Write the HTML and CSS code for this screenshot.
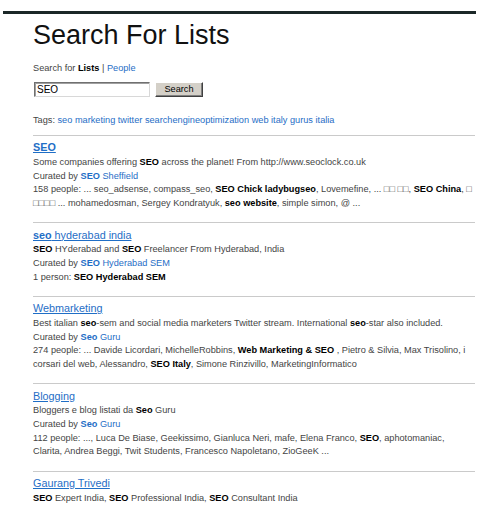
FILE: index.html
```html
<!DOCTYPE html>
<html lang="en">
<head>
    <meta charset="UTF-8">
    <title>Search For Lists</title>
    <link rel="stylesheet" href="styles.css">
</head>
<body>

    <div class="top-bar"></div>

    <div class="page">
        <h1>Search For Lists</h1>

        <div class="search-for">
            Search for <b>Lists</b> | <a href="#">People</a>
        </div>

        <form class="search-form" onsubmit="return false">
            <input type="text" class="search-input" value="SEO">
            <button type="submit" class="search-btn">Search</button>
        </form>

        <div class="tags">
            Tags: <a href="#">seo</a> <a href="#">marketing</a> <a href="#">twitter</a> <a href="#">searchengineoptimization</a> <a href="#">web</a> <a href="#">italy</a> <a href="#">gurus</a> <a href="#">italia</a>
        </div>

        <!-- Results -->
        <div class="results">
            <div class="result">
                <a href="#" class="result-title"><b>SEO</b></a>
                <p>Some companies offering <b>SEO</b> across the planet! From http://www.seoclock.co.uk</p>
                <p>Curated by <a href="#"><b>SEO</b> Sheffield</a></p>
                <p>158 people: ... seo_adsense, compass_seo, <b>SEO Chick ladybugseo</b>, Lovemefine, ... □□ □□, <b>SEO China</b>, □ □□□□ ... mohamedosman, Sergey Kondratyuk, <b>seo website</b>, simple simon, @ ...</p>
            </div>

            <div class="result">
                <a href="#" class="result-title"><b>seo</b> hyderabad india</a>
                <p><b>SEO</b> HYderabad and <b>SEO</b> Freelancer From Hyderabad, India</p>
                <p>Curated by <a href="#"><b>SEO</b> Hyderabad SEM</a></p>
                <p>1 person: <b>SEO Hyderabad SEM</b></p>
            </div>

            <div class="result">
                <a href="#" class="result-title">Webmarketing</a>
                <p>Best italian <b>seo</b>-sem and social media marketers Twitter stream. International <b>seo</b>-star also included.</p>
                <p>Curated by <a href="#"><b>Seo</b> Guru</a></p>
                <p>274 people: ... Davide Licordari, MichelleRobbins, <b>Web Marketing &amp; SEO</b> , Pietro &amp; Silvia, Max Trisolino, i corsari del web, Alessandro, <b>SEO Italy</b>, Simone Rinzivillo, MarketingInformatico</p>
            </div>

            <div class="result">
                <a href="#" class="result-title">Blogging</a>
                <p>Bloggers e blog listati da <b>Seo</b> Guru</p>
                <p>Curated by <a href="#"><b>Seo</b> Guru</a></p>
                <p>112 people: ..., Luca De Biase, Geekissimo, Gianluca Neri, mafe, Elena Franco, <b>SEO</b>, aphotomaniac, Clarita, Andrea Beggi, Twit Students, Francesco Napoletano, ZioGeeK ...</p>
            </div>

            <div class="result">
                <a href="#" class="result-title">Gaurang Trivedi</a>
                <p><b>SEO</b> Expert India, <b>SEO</b> Professional India, <b>SEO</b> Consultant India</p>
            </div>
        </div>
    </div>

</body>
</html>
```

FILE: styles.css
```css
:root {
    --link: #1f6ec6;
    --text: #444;
    --rule: #cacaca;
}

* {
    margin: 0;
    padding: 0;
    box-sizing: border-box;
}

body {
    font-family: 'Liberation Sans', Arial, sans-serif;
    font-size: 9.2px;
    color: var(--text);
    background: #fff;
    overflow: hidden;
}

a {
    color: var(--link);
    text-decoration: none;
}

b {
    color: #000;
}

a b {
    color: inherit;
}

.top-bar {
    height: 3px;
    margin: 11px 4px 0 3px;
    background: #1b2828;
}

.page {
    padding: 0 5px 0 33px;
}

h1 {
    font-size: 27px;
    font-weight: normal;
    line-height: 30px;
    color: #111;
    margin-top: 6px;
}

.search-for {
    margin-top: 11.65px;
    line-height: 13.7px;
}

.search-form {
    display: flex;
    gap: 5px;
    margin-top: 6.65px;
    margin-left: 1px;
}

.search-input {
    width: 116px;
    height: 15px;
    padding: 0 2px;
    border: 1px solid;
    border-color: #707070 #d8d8d8 #d8d8d8 #707070;
    box-shadow: inset 1px 1px 0 #a0a0a0;
    font-family: 'Liberation Sans', Arial, sans-serif;
    font-size: 10px;
    color: #000;
    outline: none;
}

.search-btn {
    width: 48px;
    height: 15px;
    background: #d4d0c8;
    border: 1px solid;
    border-color: #fff #404040 #404040 #fff;
    box-shadow: inset -1px -1px 0 #808080;
    font-family: 'Liberation Sans', Arial, sans-serif;
    font-size: 9.2px;
    color: #000;
    cursor: pointer;
}

.tags {
    margin-top: 17.15px;
    line-height: 13.7px;
}

.results {
    margin-top: 7.15px;
}

.result {
    border-top: 1px solid var(--rule);
    padding: 3.45px 0 11.65px;
}

.result:last-child {
    padding-bottom: 0;
}

.result-title {
    display: block;
    font-size: 10.8px;
    line-height: 16.5px;
    text-decoration: underline;
}

.result p {
    line-height: 13.7px;
}
```
